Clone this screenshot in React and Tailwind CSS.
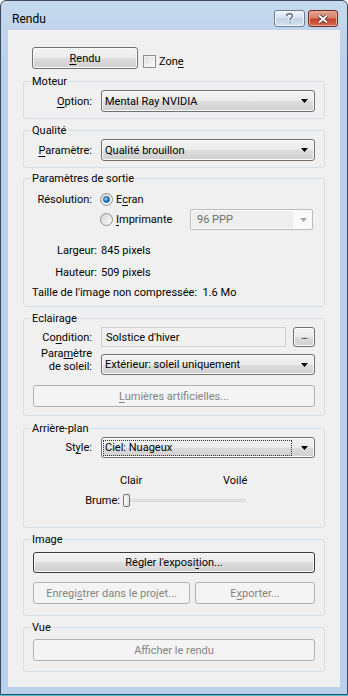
import React from "react";

const btnFace =
  "border-[#707070] bg-[linear-gradient(#f2f2f2_0%,#ebebeb_50%,#dddddd_50%,#cfcfcf_100%)] shadow-[inset_0_0_0_1px_#fbfbfb]";

function U({ children }) {
  return <span className="underline decoration-1 underline-offset-[2px]">{children}</span>;
}

function Btn({ children, className = "", disabled, dark }) {
  return (
    <div
      className={`flex items-center justify-center rounded-[3px] border ${
        disabled
          ? "border-[#adb2b5] bg-[#f4f4f4] text-[#838383]"
          : dark
          ? "border-[#3a3a3a] bg-[linear-gradient(#f2f2f2_0%,#ebebeb_50%,#dddddd_50%,#cfcfcf_100%)] shadow-[inset_0_0_0_1px_#fbfbfb]"
          : btnFace
      } ${className}`}
    >
      {children}
    </div>
  );
}

function Arrow({ color = "#000" }) {
  return (
    <svg width="7" height="4" viewBox="0 0 7 4" className="shrink-0">
      <path d="M0 0H7L3.5 4Z" fill={color} />
    </svg>
  );
}

function Combo({ children, className = "", focus }) {
  return (
    <div className={`flex items-center rounded-[3px] border pl-[2px] pr-[6px] ${btnFace} ${className}`}>
      <span
        className={`flex-1 pl-px ${focus ? "mr-[10px] outline-1 outline-dotted outline-[#333] leading-[14px]" : ""}`}
      >
        {children}
      </span>
      <Arrow />
    </div>
  );
}

function Group({ title, className = "", children }) {
  return (
    <fieldset className={`rounded-[3px] border border-[#d5dfe5] ${className}`}>
      <legend className="ml-[7px] px-px leading-[15px]">{title}</legend>
      {children}
    </fieldset>
  );
}

function Label({ children, className = "w-[59px]" }) {
  return <div className={`shrink-0 text-right ${className}`}>{children}</div>;
}

function Radio({ checked }) {
  return (
    <div className="flex h-[13px] w-[13px] shrink-0 items-center justify-center rounded-full border border-[#8e8f8f] bg-[linear-gradient(135deg,#d6d6d6,#fbfbfb)]">
      {checked && (
        <div className="h-[7px] w-[7px] rounded-full border border-[#1d5a8c] bg-[radial-gradient(circle_at_35%_35%,#a6d6f5,#1c72b8_60%,#0f4c85)]" />
      )}
    </div>
  );
}

export default function App() {
  return (
    <div className="flex h-[696px] w-[348px] flex-col font-['Roboto','Segoe_UI',sans-serif] text-[11px] leading-[15px] text-black">
      <div className="flex h-[695px] flex-col rounded-t-[6px] border border-[#3b4a5c] bg-[linear-gradient(#c6d9ee,#b9d1ea_60px,#b9d1ea)]">
        {/* title bar */}
        <div className="flex h-[29px] items-start pl-[11px] pr-[9px] pt-[9px]">
          <div className="mt-px text-[12px] leading-[17px]">Rendu</div>
          <div className="ml-auto flex gap-[3px]">
            <div className="flex h-[17px] w-[31px] items-center justify-center rounded-[3px] border border-[#6f7e91] bg-[linear-gradient(#eef3f9_0%,#d5e1ee_50%,#c2d3e6_50%,#d3e1ef_100%)] shadow-[inset_0_0_0_1px_#f4f8fc]">
              <svg width="9" height="11" viewBox="0 0 9 11">
                <path
                  d="M1.5 3.2C1.5 1.6 2.8 0.8 4.5 0.8S7.5 1.7 7.5 3.1C7.5 4.8 5 5 5 6.6V7.2M5 9V10.2"
                  fill="none"
                  stroke="#fff"
                  strokeWidth="3.2"
                />
                <path
                  d="M1.5 3.2C1.5 1.6 2.8 0.8 4.5 0.8S7.5 1.7 7.5 3.1C7.5 4.8 5 5 5 6.6V7.2M5 9V10.2"
                  fill="none"
                  stroke="#5d6b7c"
                  strokeWidth="1.4"
                />
              </svg>
            </div>
            <div className="flex h-[17px] w-[30px] items-center justify-center rounded-[3px] border border-[#6e2a1e] bg-[linear-gradient(#e6a592_0%,#d6826b_45%,#c5442d_55%,#d2694f_100%)] shadow-[inset_0_0_0_1px_#eaa997]">
              <svg width="12" height="10" viewBox="0 0 12 10">
                <path d="M2 1.5L10 8.5M10 1.5L2 8.5" stroke="#4a2a24" strokeWidth="3.6" />
                <path d="M2 1.5L10 8.5M10 1.5L2 8.5" stroke="#fff" strokeWidth="2" />
              </svg>
            </div>
          </div>
        </div>

        {/* client */}
        <div className="mx-[7px] flex h-[657px] flex-col bg-[#f0f0f0] px-[15px]">
          <div className="mt-[17px] flex items-start pl-[9px]">
            <Btn className="h-[22px] w-[106px]">
              <span>
                <U>R</U>endu
              </span>
            </Btn>
            <div className="ml-[5px] mt-[7px] flex h-[15px] items-center gap-[3px]">
              <div className="h-[13px] w-[13px] border border-[#8e8f8f] bg-[linear-gradient(135deg,#dcdcdc,#fdfdfd)] shadow-[inset_0_0_0_1px_#f4f4f4]" />
              <span>
                Zon<U>e</U>
              </span>
            </div>
          </div>

          <Group title="Moteur" className="mt-[5px]">
            <div className="flex items-center px-[9px] pb-[6px] pt-px">
              <Label>
                <U>O</U>ption:
              </Label>
              <Combo className="ml-[9px] h-[22px] flex-1">Mental Ray NVIDIA</Combo>
            </div>
          </Group>

          <Group title="Qualité" className="mt-[4px]">
            <div className="flex items-center px-[9px] pb-[6px] pt-px">
              <Label>
                <U>P</U>aramètre:
              </Label>
              <Combo className="ml-[9px] h-[22px] flex-1">Qualité brouillon</Combo>
            </div>
          </Group>

          <Group title="Paramètres de sortie" className="mt-[3px]">
            <div className="flex flex-col px-[9px] pb-[6px] pt-[5px]">
              <div className="flex h-[16px] items-center">
                <Label>Résolution:</Label>
                <div className="ml-[8px] flex items-center gap-[3px]">
                  <Radio checked />
                  <span>
                    E<U>c</U>ran
                  </span>
                </div>
              </div>
              <div className="mt-[2px] flex h-[21px] items-center">
                <div className="w-[59px] shrink-0" />
                <div className="ml-[8px] flex w-[90px] items-center gap-[3px]">
                  <Radio />
                  <span>
                    <U>I</U>mprimante
                  </span>
                </div>
                <div className="flex h-[21px] w-[123px] items-center rounded-[2px] border border-[#bcbcbc] bg-[#fafafa] pr-[5px]">
                  <div className="m-px flex h-[17px] flex-1 items-center bg-[#eeeeee] pl-[5px] text-[#6d6d6d]">96 PPP</div>
                  <div className="ml-[6px]">
                    <Arrow color="#a5a5a5" />
                  </div>
                </div>
              </div>
              <div className="mt-[13px] flex">
                <Label className="w-[64px]">Largeur:</Label>
                <span className="ml-[4px]">845 pixels</span>
              </div>
              <div className="mt-[7px] flex">
                <Label className="w-[64px]">Hauteur:</Label>
                <span className="ml-[4px]">509 pixels</span>
              </div>
              <div className="-ml-px mt-[5px]">Taille de l'image non compressée:&nbsp; 1.6 Mo</div>
            </div>
          </Group>

          <Group title="Eclairage" className="mt-[4px]">
            <div className="flex flex-col px-[9px] pb-[8px] pt-px">
              <div className="flex h-[20px] items-center">
                <Label>
                  Co<U>n</U>dition:
                </Label>
                <div className="ml-[9px] flex h-[20px] w-[185px] items-center border border-[#cfd1d4] bg-[#f0f0f0] pl-[4px]">
                  Solstice d'hiver
                </div>
                <Btn className="ml-[7px] h-[20px] w-[22px]">
                  <span className="-mt-[3px] tracking-[-1px]">...</span>
                </Btn>
              </div>
              <div className="flex items-start">
                <Label>
                  <div className="leading-[13px]">
                    Para<span className="underline decoration-1 underline-offset-[1px]">m</span>ètre
                    <br />
                    de soleil:
                  </div>
                </Label>
                <Combo className="ml-[9px] mt-[7px] h-[21px] flex-1">Extérieur: soleil uniquement</Combo>
              </div>
              <Btn disabled className="mt-[10px] h-[22px]">
                <span>
                  <U>L</U>umières artificielles...
                </span>
              </Btn>
            </div>
          </Group>

          <Group title="Arrière-plan" className="mt-[5px]">
            <div className="flex flex-col px-[9px] pb-[20px] pt-px">
              <div className="flex h-[21px] items-center">
                <Label>
                  St<U>y</U>le:
                </Label>
                <Combo focus className="ml-[9px] h-[21px] flex-1">
                  Ciel: Nuageux
                </Combo>
              </div>
              <div className="mt-[15px] flex">
                <span className="ml-[87px] w-[103px]">Clair</span>
                <span>Voilé</span>
              </div>
              <div className="mt-[5px] flex h-[14px] items-center">
                <Label className="w-[87px]">Brume:</Label>
                <div className="ml-[3px] h-[13px] w-[7px] rounded-[2px] border border-[#707070] bg-[linear-gradient(90deg,#fdfdfd,#e3e3e3)]" />
                <div className="h-[3px] w-[116px] border-y border-[#d6d6d6] bg-[#e7eaea]" />
              </div>
            </div>
          </Group>

          <Group title="Image" className="mt-[4px]">
            <div className="flex flex-col px-[9px] pb-[11px] pt-[5px]">
              <Btn dark className="h-[21px]">
                <span>
                  Régler l'exposi<U>t</U>ion...
                </span>
              </Btn>
              <div className="mt-[9px] flex">
                <Btn disabled className="h-[22px] w-[157px]">
                  <span>
                    Enregi<U>s</U>trer dans le projet...
                  </span>
                </Btn>
                <Btn disabled className="ml-[5px] h-[22px] flex-1">
                  <span>
                    E<U>x</U>porter...
                  </span>
                </Btn>
              </div>
            </div>
          </Group>

          <Group title="Vue" className="mt-[4px]">
            <div className="flex flex-col px-[9px] pb-[10px] pt-[4px]">
              <Btn disabled className="h-[22px]">
                Afficher le rendu
              </Btn>
            </div>
          </Group>
        </div>
      </div>
      <div className="h-px bg-[#3fc3d3]" />
    </div>
  );
}
